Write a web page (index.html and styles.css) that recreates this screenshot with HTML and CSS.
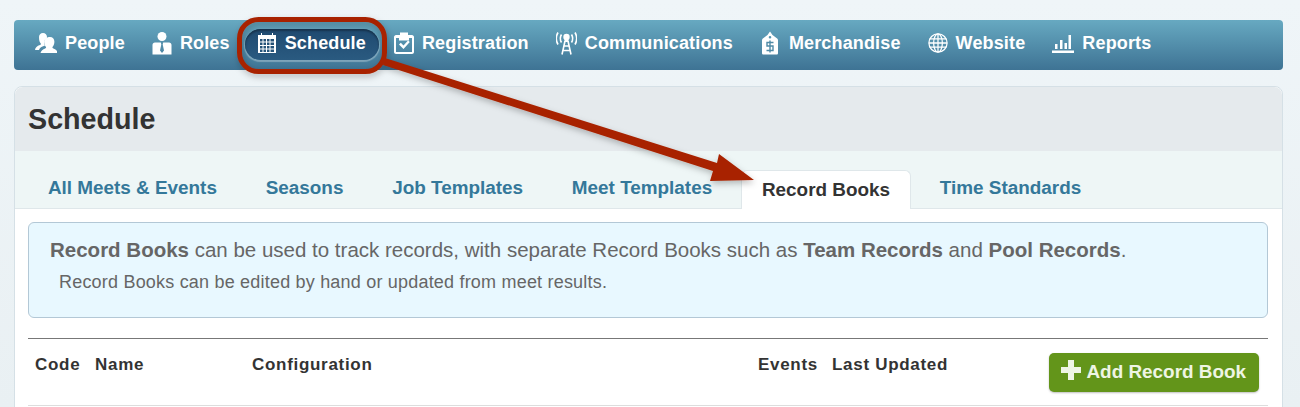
FILE: index.html
```html
<!DOCTYPE html>
<html lang="en">
<head>
    <meta charset="UTF-8">
    <title>Record Books</title>
    <link rel="stylesheet" href="styles.css">
</head>
<body>
  <nav class="topnav">
    <a class="nav-item">
      <svg class="nav-icon" width="22" height="22" viewBox="0 0 22 22"><path d="M8 1c2.500 0 4 1.800 4 4 0 .6-.1 1.100-.3 1.500-1.500.5-2.700 2.100-2.700 4 0 1.200.4 2.200 1 3l-2.500 1c-1.500.6-3 1.500-3.500 3.500H0c.3-2.500 2-4 5-5 .8-.3 1-.8.8-1.500C4.700 10.500 4 8.800 4 5c0-2.200 1.500-4 4-4z"/><path d="M15 5c2.600 0 4.400 2 4.400 4.800 0 2.200-.8 4-1.900 5.200-.2.700 0 1.100.9 1.400 2.300.8 3.800 2 4.600 4.600H5.500c.6-2.600 2.300-3.800 4.600-4.600.9-.3 1.100-.7.900-1.400-1.100-1.200-1.900-3-1.900-5.200C9.100 7 12.400 5 15 5z"/></svg>
      People
    </a>
    <a class="nav-item">
      <svg class="nav-icon" width="20" height="24" viewBox="0 0 20 24"><circle cx="10" cy="5.500" r="4.500"/><path fill-rule="evenodd" d="M3 11.500h14c1.500 0 2.500 1 2.500 2.500v9.500H.5V14c0-1.500 1-2.500 2.500-2.500zM8.800 11.500l.5 2-1.300 6 2 2.500 2-2.500-1.300-6 .5-2z"/></svg>
      Roles
    </a>
    <a class="nav-item nav-active">
      <svg class="nav-icon" width="20" height="22" viewBox="0 0 20 22"><path fill-rule="evenodd" d="M1 3h3V1h1v2h10V1h1v2h3v18H1zM3 7v2.500h2.500V7zM6.500 7v2.500H9V7zM10 7v2.500h2.500V7zM13.500 7v2.500H17V7zM3 10.500V13h2.500v-2.500zM6.500 10.500V13H9v-2.500zM10 10.500V13h2.500v-2.500zM13.500 10.500V13H17v-2.500zM3 14v2.500h2.500V14zM6.500 14v2.500H9V14zM10 14v2.500h2.500V14zM13.500 14v2.500H17V14zM3 17.500V20h2.500v-2.500zM6.500 17.500V20H9v-2.500zM10 17.500V20h2.500v-2.500zM13.500 17.500V20H17v-2.500z"/></svg>
      Schedule
    </a>
    <a class="nav-item">
      <svg class="nav-icon" width="21" height="24" viewBox="-1 0 21 24"><path fill-rule="evenodd" d="M2 4h4V1.500h8V4h4c1 0 2 1 2 2v15c0 1-1 2-2 2H2c-1 0-2-1-2-2V6c0-1 1-2 2-2zM2 7v14h16V7h-3v2.500H5V7z"/><path d="M5 13.500l1.800-1.800 2.700 2.700 4.500-5 1.800 1.700-6.300 7z"/></svg>
      Registration
    </a>
    <a class="nav-item">
      <svg class="nav-icon" width="21" height="24" viewBox="0.500 0 21 24"><g class="stroke-only"><path d="M2.500 1.500c-2.300 4-2.300 8 0 12"/><path d="M19.500 1.500c2.300 4 2.300 8 0 12"/><path d="M6 3.500c-1.500 2.500-1.500 5.500 0 8"/><path d="M16 3.500c1.500 2.500 1.500 5.500 0 8"/><path d="M9.500 10L6.500 23.500M12.500 10l3 13.500M8.500 15h5M7.500 19.500h7"/></g><circle cx="11" cy="6" r="3.200"/><rect x="9" y="7" width="4" height="4"/></svg>
      Communications
    </a>
    <a class="nav-item">
      <svg class="nav-icon" width="21" height="24" viewBox="-1 0 21 24"><path fill-rule="evenodd" d="M9 .5l2.500 3.500 4 3c1 .8 1.500 1.200 1.500 2.500v12.500c0 1-.5 1.500-1.500 1.500h-13C1.500 23.500 1 23 1 22V9.500c0-1.300.5-1.700 1.500-2.500l4-3zM9 5a1.300 1.300 0 1 0 0 2.600A1.300 1.300 0 0 0 9 5z"/><path class="dollar" d="M12.500 11.500H6v3.500h6v4.500H5.500M9 9.500v12"/></svg>
      Merchandise
    </a>
    <a class="nav-item">
      <svg class="nav-icon" width="20" height="20" viewBox="0 0 22 22"><g class="stroke-only thin"><circle cx="11" cy="11" r="10"/><ellipse cx="11" cy="11" rx="4.800" ry="10"/><path d="M11 1v20M1.800 6.500h18.400M1.800 15.500h18.400M1 11h20"/></g></svg>
      Website
    </a>
    <a class="nav-item">
      <svg class="nav-icon" width="22" height="20" viewBox="0 0 22 20"><rect x="0" y="17.500" width="22" height="2.500"/><rect x="3" y="11" width="2.500" height="5"/><rect x="8" y="7" width="2.500" height="9"/><rect x="12.500" y="10" width="2.500" height="6"/><rect x="16.500" y="2" width="2.500" height="14"/></svg>
      Reports
    </a>
  </nav>

  <div class="panel">
    <div class="panel-head">
      <h1>Schedule</h1>
    </div>
    <div class="tabs">
      <a class="tab">All Meets &amp; Events</a>
      <a class="tab">Seasons</a>
      <a class="tab">Job Templates</a>
      <a class="tab">Meet Templates</a>
      <a class="tab tab-active">Record Books</a>
      <a class="tab">Time Standards</a>
    </div>
    <div class="panel-body">
      <div class="notice">
        <p class="notice-main"><b>Record Books</b> can be used to track records, with separate Record Books such as <b>Team Records</b> and <b>Pool Records</b>.</p>
        <p class="notice-sub">Record Books can be edited by hand or updated from meet results.</p>
      </div>
      <div class="table-head">
        <span class="col col-code">Code</span>
        <span class="col col-name">Name</span>
        <span class="col col-config">Configuration</span>
        <span class="col col-events">Events</span>
        <span class="col col-updated">Last Updated</span>
        <button class="add-btn" type="button"><span class="plus"></span>Add Record Book</button>
      </div>
    </div>
  </div>

  <svg class="annotation" width="1300" height="407" viewBox="0 0 1300 407">
    <defs>
      <filter id="soft" x="-5%" y="-20%" width="110%" height="150%">
        <feDropShadow dx="1" dy="3" stdDeviation="3" flood-color="#000" flood-opacity="0.25"/>
      </filter>
    </defs>
    <g filter="url(#soft)">
      <rect x="239.500" y="19.500" width="145" height="52" rx="19" fill="none" stroke="#a82400" stroke-width="5"/>
      <path d="M385 58L717 163l2-9 35 26-44 1 3-10L383 65z" fill="#a82400"/>
    </g>
  </svg>
</body>
</html>
```

FILE: styles.css
```css
* {
   box-sizing: border-box;
}

body {
   margin: 0;
   height: 407px;
   overflow: hidden;
   position: relative;
   padding: 20px 17px 0 14px;
   background: linear-gradient(#eff5f8, #e9f0f3);
   font-family: "Liberation Sans", Arial, sans-serif;
   color: #333;
}

.topnav {
   display: flex;
   align-items: center;
   height: 50px;
   padding: 0 0 1px 9px;
   border-radius: 4px;
   background: linear-gradient(#67a9c1, #3e7394);
}

.nav-item {
   display: flex;
   align-items: center;
   gap: 8px;
   height: 31px;
   padding: 0 13px 3px 12px;
   margin-right: 2px;
   border-radius: 16px;
   color: #fff;
   font-size: 18px;
   font-weight: bold;
   letter-spacing: 0.15px;
   white-space: nowrap;
}

.nav-icon {
   fill: #fff;
   flex: none;
}

.stroke-only path, .stroke-only circle, .stroke-only ellipse {
   fill: none;
   stroke: #fff;
   stroke-width: 1.600;
}

.stroke-only.thin path, .stroke-only.thin circle, .stroke-only.thin ellipse {
   stroke-width: 1.400;
}

.dollar {
   fill: none;
   stroke: #4f8aa6;
   stroke-width: 1.400;
}

.nav-active {
   background: linear-gradient(#1f4a70, #2a5a80);
   box-shadow: inset 0 2px 2px rgba(0,0,0,0.3), 0 1px 1px 1px rgba(255,255,255,0.3);
}

.panel {
   margin-top: 16px;
   height: 340px;
   border: 1px solid #d5e0e6;
   border-radius: 8px 8px 0 0;
   background: #fff;
}

.panel-head {
   height: 64px;
   padding: 0 13px;
   display: flex;
   align-items: center;
   background: #e5eaed;
   border-radius: 8px 8px 0 0;
}

.panel-head h1 {
   margin: 0;
   font-size: 28.700px;
   font-weight: bold;
   color: #333;
}

.tabs {
   display: flex;
   align-items: flex-end;
   height: 58px;
   padding-left: 8.500px;
   background: #eef6f6;
   border-bottom: 1px solid #dfe7ea;
}

.tab {
   height: 38px;
   margin: 0 4.400px;
   padding: 7px 20px 0;
   font-size: 18.900px;
   font-weight: bold;
   color: #34789a;
   white-space: nowrap;
}

.tab-active {
   height: 39px;
   margin-bottom: -1px;
   padding: 8px 20px 0;
   background: #fff;
   border: 1px solid #dfe7ea;
   border-bottom: 0;
   border-radius: 6px 6px 0 0;
   color: #333;
}

.panel-body {
   padding: 13px 14px 0 13px;
}

.notice {
   height: 96px;
   padding: 14px 21px;
   background: #e8f8ff;
   border: 1px solid #b3c8d6;
   border-radius: 6px;
   color: #666;
}

.notice p {
   margin: 0;
}

.notice-main {
   font-size: 20.500px;
   line-height: 26px;
}

.notice-sub {
   margin-top: 8px !important;
   padding-left: 9px;
   font-size: 18px;
   letter-spacing: 0.2px;
   line-height: 22px;
}

.table-head {
   position: relative;
   display: flex;
   margin-top: 20px;
   height: 68px;
   border-top: 1px solid #777;
   border-bottom: 1px solid #ddd;
   font-size: 17px;
}

.col {
   padding-top: 16px;
   font-weight: bold;
   letter-spacing: 0.7px;
   color: #333;
}

.col-code {
   margin-left: 7px;
   width: 60px;
}

.col-name {
   width: 157px;
}

.col-config {
   width: 506px;
}

.col-events {
   width: 74px;
}

.add-btn {
   display: flex;
   align-items: center;
   gap: 5px;
   margin: 14px 9px 0 auto;
   height: 39px;
   padding: 0 13px 2px 12px;
   border: 0;
   border-radius: 5px;
   background: #63951a;
   box-shadow: 0 1px 2px rgba(0,0,0,0.25);
   color: #eef5e4;
   font-family: inherit;
   font-size: 18.900px;
   font-weight: bold;
   white-space: nowrap;
}

.plus {
   display: block;
   width: 20px;
   height: 20px;
   margin-bottom: 3px;
   background:
      linear-gradient(#eef5e4, #eef5e4) center / 20px 6px no-repeat,
      linear-gradient(#eef5e4, #eef5e4) center / 6px 20px no-repeat;
}

.annotation {
   position: absolute;
   left: 0;
   top: 0;
   pointer-events: none;
}
```
